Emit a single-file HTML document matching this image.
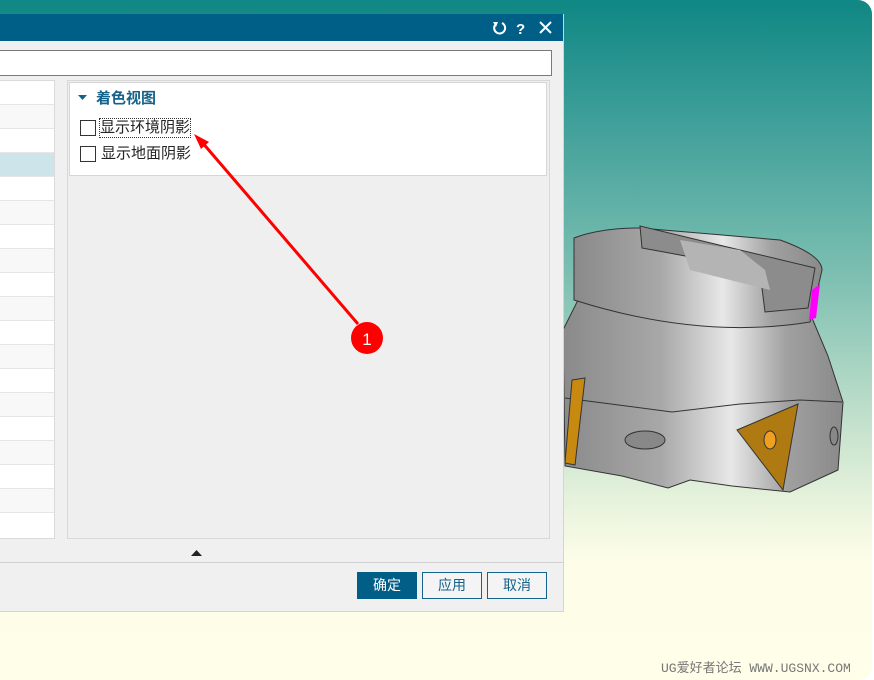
<!DOCTYPE html>
<html><head><meta charset="utf-8"><style>
*{margin:0;padding:0;box-sizing:border-box}
body{width:874px;height:680px;background:#fff;position:relative;overflow:hidden;font-family:"Liberation Sans","Noto Sans CJK SC",sans-serif}
.bg{position:absolute;left:-20px;top:0;width:892px;height:680px;border-radius:14px;background:linear-gradient(#0f8784 0px,#3f9f99 120px,#7fc0b2 280px,#c2e0cc 420px,#e6f2dc 500px,#fdfde8 560px,#fefee9 680px)}
.dlg{position:absolute;left:0;top:14px;width:564px;height:598px;background:#f0f0f0;border-right:1px solid #d4d4d4;border-bottom:1px solid #d4d4d4}
.title{height:27px;background:#005f87;position:relative}
.inp{position:absolute;left:-2px;top:36px;width:554px;height:26px;background:#fff;border:1px solid #7a7a7a}
.list{position:absolute;left:-2px;top:66px;width:57px;height:459px;background:#fff;border:1px solid #dadada}
.row{height:24px;border-bottom:1px solid #e6e6e6}
.rp{position:absolute;left:67px;top:66px;width:483px;height:459px;background:#efefef;border:1px solid #d8d8d8}
.grp{position:absolute;left:1px;top:1px;width:478px;height:94px;background:#fff;border:1px solid #d6d6d6}
.gt{position:absolute;left:26px;top:4px;font-size:15px;font-weight:bold;color:#15628a}
.cb{position:absolute;left:11px;width:16px;height:16px;border:1px solid #333;background:#fff}
.cl{position:absolute;left:31px;font-size:15px;color:#222;line-height:18px}
.btn{position:absolute;top:558px;width:60px;height:27px;border:1px solid #15628a;background:#f4f4f4;color:#15628a;font-size:14px;text-align:center;line-height:25px}
</style></head><body>
<div class="bg"></div>
<svg style="position:absolute;left:0;top:0" width="874" height="680">
<defs>
<linearGradient id="g1" x1="0" x2="1"><stop offset="0" stop-color="#8a8a8a"/><stop offset=".35" stop-color="#a8a8a8"/><stop offset=".6" stop-color="#e8e8e8"/><stop offset=".8" stop-color="#a0a0a0"/><stop offset="1" stop-color="#8a8a8a"/></linearGradient>
</defs>
<path d="M563 330 L578 300 L812 318 L828 356 L843 402 L838 470 L790 492 L732 486 L690 480 L668 488 L622 476 L565 466 Z" fill="url(#g1)" stroke="#333" stroke-width="1"/>
<path d="M565 398 L580 400 L672 412 L740 404 L800 400 L842 402" fill="none" stroke="#333"/>
<path d="M574 238 Q600 228 640 228 L780 240 Q822 255 822 270 L810 322 Q700 340 574 300 Z" fill="url(#g1)" stroke="#333"/>
<path d="M640 226 L642 248 Q720 262 760 272 L765 312 L808 308 L815 268 Z" fill="#8c8c8c" stroke="#333"/>
<path d="M680 240 L740 250 L765 270 L770 290 L690 270 Z" fill="#b4b4b4"/>
<path d="M812 290 L820 284 L816 318 L809 320 Z" fill="#f0f"/>
<ellipse cx="645" cy="440" rx="20" ry="9" fill="#888" stroke="#333"/>
<ellipse cx="834" cy="436" rx="4" ry="9" fill="#888" stroke="#333"/>
<path d="M737 430 L798 404 L783 490 Z" fill="#b07a12" stroke="#333"/>
<ellipse cx="770" cy="440" rx="6" ry="9" fill="#f0a020" stroke="#333"/>
<path d="M572 380 L585 378 L575 465 L565 463 Z" fill="#c7890f" stroke="#333"/>
</svg>
<div class="dlg">
<div class="title">
<svg style="position:absolute;left:490px;top:6px" width="64" height="16">
<path d="M12 3 A5.5 5.5 0 1 1 5 5" fill="none" stroke="#fff" stroke-width="2"/><path d="M3 2 L8 2 L6 7 Z" fill="#fff"/>
<text x="26" y="14" fill="#fff" font-size="15" font-weight="bold" font-family="Liberation Sans">?</text>
<path d="M50 2 L61 13 M61 2 L50 13" stroke="#fff" stroke-width="2"/>
</svg></div>
<div class="inp"></div>
<div class="list">
<div class="row"></div><div class="row" style="background:#f8f8f8"></div><div class="row"></div><div class="row" style="background:#cde5ea"></div><div class="row"></div><div class="row" style="background:#f8f8f8"></div><div class="row"></div><div class="row" style="background:#f8f8f8"></div><div class="row"></div><div class="row" style="background:#f8f8f8"></div><div class="row"></div><div class="row" style="background:#f8f8f8"></div><div class="row"></div><div class="row" style="background:#f8f8f8"></div><div class="row"></div><div class="row" style="background:#f8f8f8"></div><div class="row"></div><div class="row" style="background:#f8f8f8"></div>
</div>
<div class="rp"><div class="grp">
<svg style="position:absolute;left:8px;top:11px" width="10" height="8"><path d="M0 1 L9 1 L4.5 6 Z" fill="#15628a"/></svg>
<div class="gt">着色视图</div>
<div class="cb" style="top:37px;left:10px"></div><div class="cl" style="top:36px;outline:1px dotted #333;left:30px">显示环境阴影</div>
<div class="cb" style="top:63px;left:10px"></div><div class="cl" style="top:62px">显示地面阴影</div>
</div></div>
<svg style="position:absolute;left:191px;top:535px" width="12" height="8"><path d="M0 7 L11 7 L5.5 1 Z" fill="#222"/></svg>
<div style="position:absolute;left:0;top:548px;width:563px;border-top:1px solid #d0d0d0"></div>
<div class="btn" style="left:357px;background:#015f87;color:#fff;border-color:#015f87">确定</div>
<div class="btn" style="left:422px">应用</div>
<div class="btn" style="left:487px">取消</div>
</div>
<svg style="position:absolute;left:0;top:0" width="874" height="680">
<path d="M358 324 L201 141" stroke="#f00" stroke-width="3"/>
<path d="M194 134 L209 142 L201 149 Z" fill="#f00"/>
<circle cx="367" cy="338" r="16" fill="#f00"/>
<text x="367" y="345" fill="#fff" font-size="17" text-anchor="middle" font-family="Liberation Sans">1</text>
</svg>
<div style="position:absolute;left:661px;top:657px;font-family:'Liberation Mono','Noto Sans CJK SC',monospace;font-size:13px;color:#777">UG爱好者论坛 WWW.UGSNX.COM</div>
</body></html>
